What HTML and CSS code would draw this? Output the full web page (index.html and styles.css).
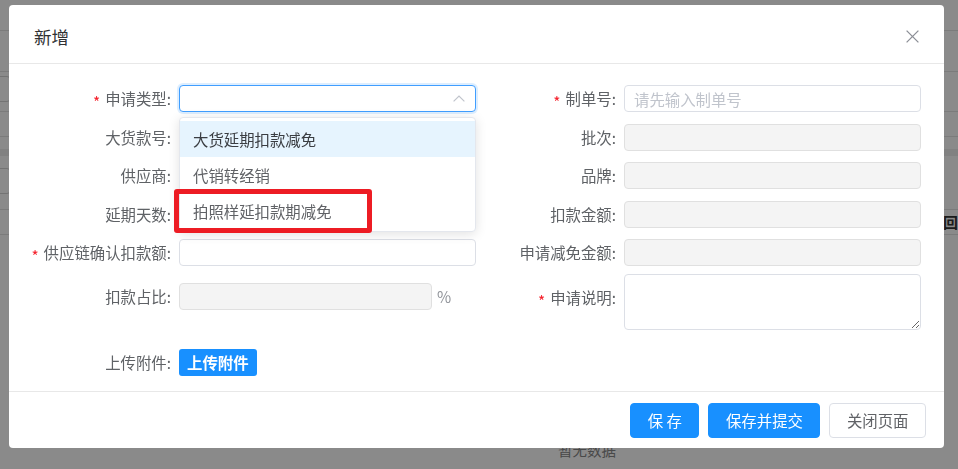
FILE: index.html
```html
<!DOCTYPE html>
<html lang="zh-CN">
<head>
	<meta charset="UTF-8">
	<title>新增</title>
	<link rel="stylesheet" href="styles.css">
</head>
<body>
<!-- 背景页面 -->
<div class="page">
	<div class="bg-row bg-h31"></div>
	<div class="bg-row bg-h40"></div>
	<div class="bg-row bg-search"><span class="bg-box"></span></div>
	<div class="bg-row bg-h24"></div>
	<div class="bg-band"></div>
	<div class="bg-row bg-search2"><span class="bg-box"></span></div>
	<div class="bg-row bg-th"><span class="bg-back">返回</span></div>
	<div class="bg-empty">暂无数据</div>
</div>
<div class="mask"></div>

<div class="dialog">
	<div class="dialog-header">
		<span class="dialog-title">新增</span>
		<svg class="dialog-close" width="13" height="13" viewBox="0 0 13 13">
			<path d="M0.6 0.6L12.4 12.4M12.4 0.6L0.6 12.4" stroke="#8c8f96" stroke-width="1.3" fill="none"/>
		</svg>
	</div>

	<div class="dialog-body">
		<div class="form-col form-left">
			<div class="form-item">
				<label class="form-label"><i class="req">*</i>申请类型:</label>
				<div class="select">
					<input class="input is-focus" type="text" readonly>
					<svg class="select-arrow" width="12" height="7" viewBox="0 0 12 7">
						<path d="M0.6 6.4L6 1L11.4 6.4" stroke="#c0c4cc" stroke-width="1.2" fill="none"/>
					</svg>
					<ul class="dropdown">
						<li class="hover">大货延期扣款减免</li>
						<li>代销转经销</li>
						<li>拍照样延扣款期减免</li>
					</ul>
					<div class="mark"></div>
				</div>
			</div>
			<div class="form-item">
				<label class="form-label">大货款号:</label>
				<input class="input" type="text">
			</div>
			<div class="form-item">
				<label class="form-label">供应商:</label>
				<input class="input" type="text">
			</div>
			<div class="form-item">
				<label class="form-label">延期天数:</label>
				<input class="input" type="text">
			</div>
			<div class="form-item">
				<label class="form-label"><i class="req">*</i>供应链确认扣款额:</label>
				<input class="input" type="text">
			</div>
			<div class="form-item item-ratio">
				<label class="form-label">扣款占比:</label>
				<input class="input input-ratio" type="text" disabled>
				<span class="unit">%</span>
			</div>
			<div class="form-item item-upload">
				<label class="form-label">上传附件:</label>
				<button class="btn-upload">上传附件</button>
			</div>
		</div>

		<div class="form-col form-right">
			<div class="form-item">
				<label class="form-label"><i class="req">*</i>制单号:</label>
				<input class="input" type="text" placeholder="请先输入制单号">
			</div>
			<div class="form-item">
				<label class="form-label">批次:</label>
				<input class="input" type="text" disabled>
			</div>
			<div class="form-item">
				<label class="form-label">品牌:</label>
				<input class="input" type="text" disabled>
			</div>
			<div class="form-item">
				<label class="form-label">扣款金额:</label>
				<input class="input" type="text" disabled>
			</div>
			<div class="form-item">
				<label class="form-label">申请减免金额:</label>
				<input class="input" type="text" disabled>
			</div>
			<div class="form-item item-remark">
				<label class="form-label label-top"><i class="req">*</i>申请说明:</label>
				<textarea class="textarea"></textarea>
			</div>
		</div>
	</div>

	<div class="dialog-footer">
		<button class="btn btn-primary">保 存</button>
		<button class="btn btn-primary">保存并提交</button>
		<button class="btn">关闭页面</button>
	</div>
</div>
</body>
</html>
```

FILE: styles.css
```css
*{
	box-sizing: border-box;
}
body{
	margin: 0;
	padding: 0;
	background: #fff;
	font-family: "Noto Sans CJK SC", "Noto Sans", sans-serif;
	font-size: 15.4px;
	color: #606266;
	overflow: hidden;
}
ul{
	margin: 0;
	padding: 0;
	list-style: none;
}
i{
	font-style: normal;
}

/* 背景页面 */
.page{
	height: 469px;
	display: flex;
	flex-direction: column;
}
.bg-row{
	border-bottom: 1px solid #e4e4e4;
}
.bg-h31{
	height: 31px;
}
.bg-h40{
	height: 41px;
}
.bg-search{
	height: 40px;
	padding-top: 4px;
}
.bg-search2{
	height: 54px;
	padding-top: 12px;
}
.bg-box{
	display: block;
	width: 40px;
	height: 26px;
	margin-left: -29px;
	border: 1px solid #d4d4d4;
	border-radius: 4px;
}
.bg-h24{
	height: 25px;
}
.bg-band{
	height: 7px;
	margin-top: 12px;
	background: #eee;
}
.bg-th{
	height: 25px;
	text-align: right;
	line-height: 24px;
	font-weight: bold;
	color: #333;
	font-size: 15px;
}
.bg-empty{
	margin-top: auto;
	height: 26px;
	padding-left: 558px;
	line-height: 14px;
	font-size: 14.5px;
	color: #888;
}
.mask{
	position: fixed;
	left: 0;
	top: 0;
	right: 0;
	bottom: 0;
	background: rgba(0,0,0,.46);
}

/* 弹窗 */
.dialog{
	position: absolute;
	left: 9px;
	top: 5px;
	width: 935px;
	height: 443px;
	background: #fff;
	border-radius: 4px;
	display: flex;
	flex-direction: column;
}
.dialog-header{
	height: 59px;
	padding: 0 25px 0 25px;
	border-bottom: 1px solid #e8e8e8;
	display: flex;
	align-items: center;
	justify-content: space-between;
}
.dialog-title{
	font-size: 17.5px;
	color: #303133;
	padding-top: 4px;
}
.dialog-close{
	display: block;
	margin-top: 4px;
}
.dialog-body{
	flex: 1;
	display: flex;
	padding-top: 21px;
}
.form-col{
	display: flex;
	flex-direction: column;
}
.form-left{
	width: 467px;
}
.form-right{
	width: 445px;
}
.form-left .form-label{
	width: 170px;
}
.form-right .form-label{
	width: 148px;
}
.form-item{
	display: flex;
	align-items: flex-start;
	margin-bottom: 11.5px;
}
.form-label{
	flex: none;
	height: 27px;
	line-height: 27px;
	padding-right: 8px;
	text-align: right;
	white-space: nowrap;
	color: #5f6266;
}
.label-top{
	padding-top: 10px;
	height: auto;
}
.req{
	display: inline-block;
	color: #f5222d;
	margin-right: 5px;
	transform: translateY(3px);
}
.input{
	display: block;
	width: 297px;
	height: 27px;
	margin: 0;
	padding: 0 9px;
	border: 1px solid #dcdfe6;
	border-radius: 4px;
	background: #fff;
	font-family: inherit;
	font-size: 15.4px;
	color: #606266;
	outline: none;
}
.input::placeholder{
	color: #c0c4cc;
}
.input:disabled{
	background: #f4f4f4;
	border-color: #e0e0e0;
}
.is-focus{
	border-color: #409eff;
	box-shadow: 0 0 0 2px rgba(64,158,255,.18);
}
.item-ratio{
	margin-top: 5.5px;
}
.input-ratio{
	width: 253px;
}
.unit{
	margin-left: 5px;
	line-height: 27px;
	color: #909399;
}
.item-upload{
	margin-top: 27.5px;
	margin-bottom: 0;
}
.btn-upload{
	height: 27px;
	padding: 0 8px;
	border: none;
	border-radius: 3px;
	background: #1890ff;
	color: #fff;
	font-family: inherit;
	font-size: 15.4px;
	font-weight: bold;
	line-height: 27px;
}
.item-remark{
	margin-top: -3.5px;
}
.textarea{
	display: block;
	width: 297px;
	height: 56px;
	margin: 0;
	padding: 5px 9px;
	border: 1px solid #dcdfe6;
	border-radius: 4px;
	resize: vertical;
	font-family: inherit;
	font-size: 15.4px;
	outline: none;
}

/* 下拉 */
.select{
	position: relative;
}
.select-arrow{
	position: absolute;
	right: 11px;
	top: 10px;
}
.dropdown{
	position: absolute;
	left: 0;
	top: 32px;
	width: 297px;
	padding: 3px 0 2px;
	background: #fff;
	border: 1px solid #e4e7ed;
	border-radius: 4px;
	box-shadow: 0 2px 12px 0 rgba(0,0,0,.12);
	z-index: 2;
}
.dropdown li{
	height: 36px;
	line-height: 36px;
	padding-left: 13px;
	color: #606266;
	white-space: nowrap;
}
.dropdown .hover{
	background: #e6f4fe;
	color: #3a3d42;
}
/* 标注红框 */
.mark{
	position: absolute;
	left: -5px;
	top: 104px;
	width: 198px;
	height: 44px;
	border: 5px solid #ed1c24;
	border-radius: 3px;
	z-index: 3;
}

/* 底部按钮 */
.dialog-footer{
	height: 57px;
	padding: 11px 18px 0 0;
	border-top: 1px solid #e8e8e8;
	display: flex;
	justify-content: flex-end;
	align-items: flex-start;
	gap: 9px;
}
.btn{
	height: 35px;
	padding: 0 16.5px;
	border: 1px solid #dcdfe6;
	border-radius: 4px;
	background: #fff;
	color: #606266;
	font-family: inherit;
	font-size: 15.4px;
	line-height: 33px;
	white-space: pre;
}
.btn-primary{
	background: #1890ff;
	border-color: #1890ff;
	color: #fff;
}
```
